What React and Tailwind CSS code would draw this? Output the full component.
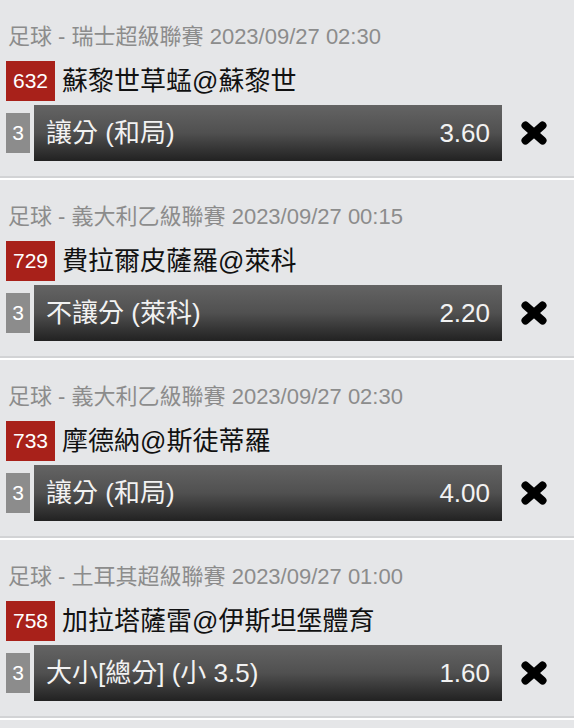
import React from "react";

const bets = [
  { league: "足球 - 瑞士超級聯賽 2023/09/27 02:30", no: "632", match: "蘇黎世草蜢@蘇黎世", sel: "讓分 (和局)", odds: "3.60" },
  { league: "足球 - 義大利乙級聯賽 2023/09/27 00:15", no: "729", match: "費拉爾皮薩羅@萊科", sel: "不讓分 (萊科)", odds: "2.20" },
  { league: "足球 - 義大利乙級聯賽 2023/09/27 02:30", no: "733", match: "摩德納@斯徒蒂羅", sel: "讓分 (和局)", odds: "4.00" },
  { league: "足球 - 土耳其超級聯賽 2023/09/27 01:00", no: "758", match: "加拉塔薩雷@伊斯坦堡體育", sel: "大小[總分] (小 3.5)", odds: "1.60" },
];

function XIcon() {
  return (
    <svg width="26" height="24" viewBox="0 0 26 24" aria-hidden="true">
      <g stroke="#000" strokeWidth="8" strokeLinecap="round">
        <line x1="4.5" y1="4.5" x2="21.5" y2="19.5" />
        <line x1="21.5" y1="4.5" x2="4.5" y2="19.5" />
      </g>
    </svg>
  );
}

function Card({ b }) {
  return (
    <div className="w-[574px] bg-[#e5e6e8] border-b-2 border-[#d2d3d5] mb-[2px] pt-[24px] pb-[15px] pl-[6px]">
      <div className="text-[22px] leading-[26px] text-[#8c8c8c] pl-[2px] whitespace-nowrap">{b.league}</div>
      <div className="mt-[11px] flex items-center h-[40px]">
        <div className="h-[40px] px-[7px] bg-[#a8211a] text-white text-[21px] flex items-center">{b.no}</div>
        <div className="ml-[7px] text-[26px] leading-[30px] text-[#111]">{b.match}</div>
      </div>
      <div className="mt-[4px] flex items-center">
        <div className="w-[24px] h-[40px] bg-[#8c8c8c] text-white text-[21px] flex items-center justify-center">3</div>
        <div className="ml-[4px] w-[468px] h-[56px] flex items-center justify-between px-[12px] bg-gradient-to-b from-[#646464] via-[#505050] to-[#222222] text-[#f2f2f2] text-[26px]">
          <span>{b.sel}</span>
          <span>{b.odds}</span>
        </div>
        <div className="ml-[19px] flex items-center">
          <XIcon />
        </div>
      </div>
    </div>
  );
}

export default function App() {
  return (
    <div
      className="w-[582px] h-[728px] overflow-hidden bg-white"
      style={{ fontFamily: '"Liberation Sans", "Noto Sans CJK TC", sans-serif' }}
    >
      {bets.map((b, i) => (
        <Card key={i} b={b} />
      ))}
      <div className="w-[574px] h-[40px] bg-[#e5e6e8]" />
    </div>
  );
}
